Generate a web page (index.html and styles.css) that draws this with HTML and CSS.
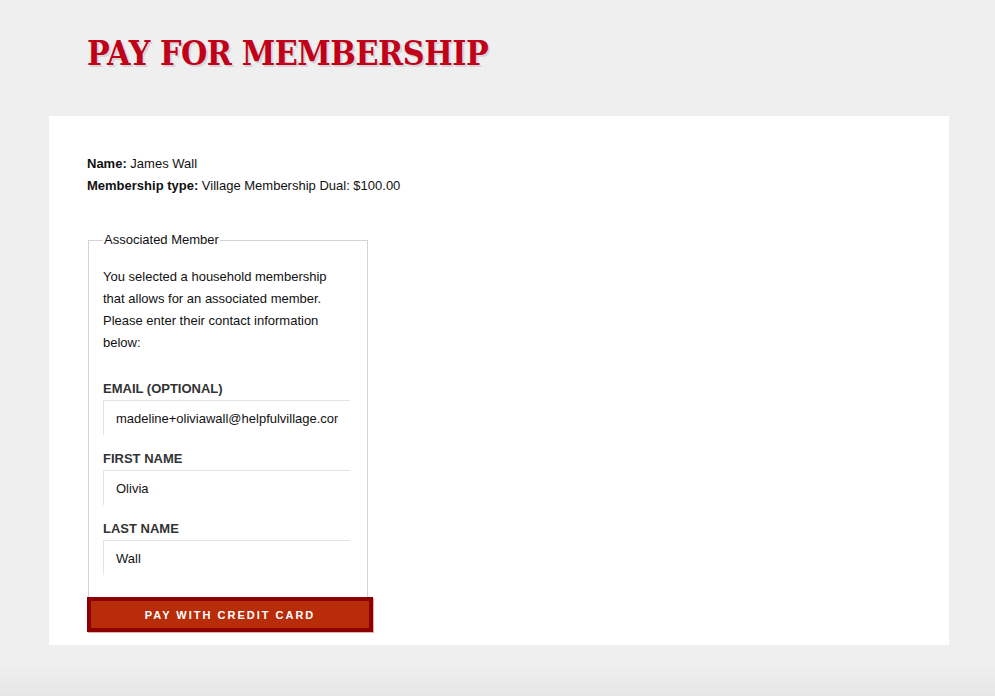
FILE: index.html
```html
<!DOCTYPE html>
<html lang="en">
<head>
  <meta charset="UTF-8">
  <meta name="viewport" content="width=device-width, initial-scale=1.0">
  <title>Pay for Membership</title>
  <link rel="stylesheet" href="styles.css">
</head>
<body>
  <div class="page-header">
    <h1 class="page-title">Pay for Membership</h1>
  </div>

  <div class="panel">
    <div class="summary">
      <div><strong>Name:</strong> James Wall</div>
      <div><strong>Membership type:</strong> Village Membership Dual: $100.00</div>
    </div>

    <form class="payment-form">
      <fieldset class="member-box">
        <legend>Associated Member</legend>
        <p class="member-note">You selected a household membership that allows for an associated member. Please enter their contact information below:</p>

        <div class="field">
          <label class="field-label" for="email">Email (optional)</label>
          <input class="field-input" id="email" type="text" value="madeline+oliviawall@helpfulvillage.com">
        </div>

        <div class="field">
          <label class="field-label" for="first-name">First name</label>
          <input class="field-input" id="first-name" type="text" value="Olivia">
        </div>

        <div class="field">
          <label class="field-label" for="last-name">Last name</label>
          <input class="field-input" id="last-name" type="text" value="Wall">
        </div>
      </fieldset>

      <button class="pay-button" type="button">Pay with credit card</button>
    </form>
  </div>
</body>
</html>
```

FILE: styles.css
```css
* {
  margin: 0;
  padding: 0;
  box-sizing: border-box;
}

html {
  height: 100%;
}

body {
  min-height: 100%;
  font-family: "Liberation Sans", Arial, sans-serif;
  font-size: 13px;
  color: #111;
  background: linear-gradient(to bottom, #efefef 0, #efefef 665px, #e6e6e6 100%);
}

.page-header {
  padding: 33px 87px 0;
  height: 116px;
}

.page-title {
  display: inline-block;
  font-family: "DejaVu Serif", "Liberation Serif", serif;
  font-size: 34px;
  font-weight: 700;
  text-transform: uppercase;
  color: #c1001a;
  letter-spacing: -0.5px;
  text-shadow: 2px 2px 0 #d6d6d6;
  transform: scaleX(0.89);
  transform-origin: left center;
}

.panel {
  width: 900px;
  margin-left: 49px;
  background: #fff;
  padding: 37px 38px 13px;
}

.summary {
  line-height: 22px;
}

.summary strong {
  font-weight: 700;
}

.payment-form {
  margin-top: 35px;
  width: 286px;
}

.member-box {
  width: 280px;
  margin-left: 1px;
  border: 1px solid #d4d4d4;
  border-bottom: none;
  padding: 18px 14px 22px;
}

.member-box legend {
  padding: 0 1px;
  line-height: 16px;
}

.member-note {
  width: 240px;
  line-height: 22px;
  margin-bottom: 27px;
}

.field + .field {
  margin-top: 16px;
}

.field-label {
  display: block;
  font-weight: 700;
  text-transform: uppercase;
  color: #333;
  line-height: 16px;
  margin-bottom: 3px;
}

.field-input {
  display: block;
  width: 247px;
  height: 35px;
  padding: 0 12px;
  border: none;
  border-top: 1px solid #e4e4e4;
  border-left: 1px solid #e4e4e4;
  font-family: inherit;
  font-size: 13px;
  color: #111;
  background: #fff;
  outline: none;
}

.pay-button {
  display: block;
  width: 286px;
  height: 35px;
  background: #b82c0a;
  border: 4px solid #8e0000;
  box-shadow: 1px 1px 0 #e7b3a8;
  color: #fff;
  font-family: inherit;
  font-size: 11px;
  font-weight: 700;
  letter-spacing: 2px;
  text-transform: uppercase;
  cursor: pointer;
}
```
